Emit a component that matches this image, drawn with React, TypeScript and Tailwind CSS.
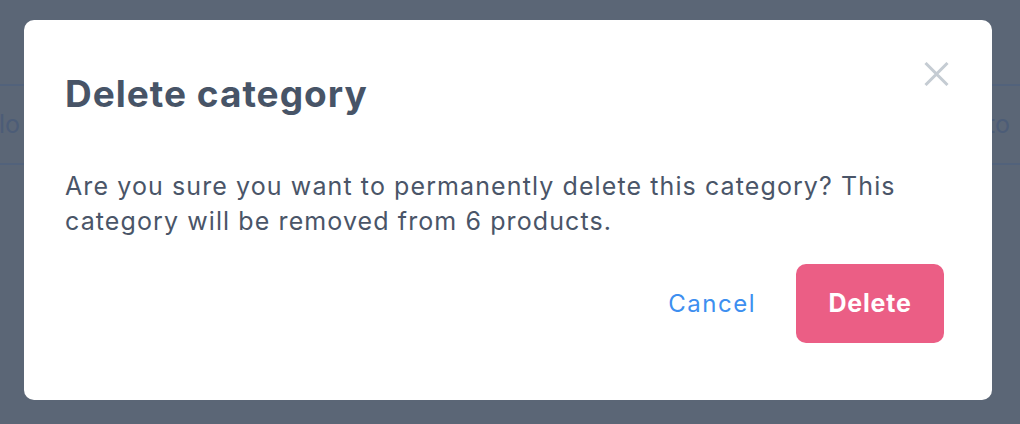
export default function App() {
  return (
    <div className="relative h-[424px] w-full overflow-hidden bg-[#5b6676] font-['Inter',sans-serif]">
      {/* page behind the dialog */}
      <div className="pt-[84px]">
        <div className="flex h-[81px] items-center justify-between border-y-2 border-[#52627b] text-[25px] text-[#4c5c77]">
          <span className="-ml-[1px]">lo</span>
          <span className="mr-[10px]">to</span>
        </div>
      </div>

      {/* dialog */}
      <div className="absolute inset-0 px-[24px] pt-[20px]">
        <div className="relative h-[380px] w-[968px] rounded-[10px] bg-white pl-[41px] pr-[48px] pt-[55px]">
          <button className="absolute right-[43px] top-[42px] text-[#c5ccd3]">
            <svg width="25" height="24" viewBox="0 0 25 24" fill="none" stroke="currentColor" strokeWidth="3">
              <path d="M1.5 1 L23.5 23 M23.5 1 L1.5 23" />
            </svg>
          </button>
          <h2 className="text-[37px] font-bold leading-none tracking-[1px] text-[#475467]">
            Delete category
          </h2>
          <p className="mt-[57px] text-[25px] leading-[35px] tracking-[1.1px] text-[#4a5568]">
            Are you sure you want to permanently delete this category? This
            <br />
            category will be removed from 6 products.
          </p>
          <div className="mt-[25px] flex items-center justify-end gap-[40px]">
            <button className="text-[24px] tracking-[1.5px] text-[#3d8ff0]">Cancel</button>
            <button className="h-[79px] w-[148px] rounded-[10px] bg-[#eb5e85] text-[25px] font-bold tracking-[0.8px] text-white">
              Delete
            </button>
          </div>
        </div>
      </div>
    </div>
  );
}
